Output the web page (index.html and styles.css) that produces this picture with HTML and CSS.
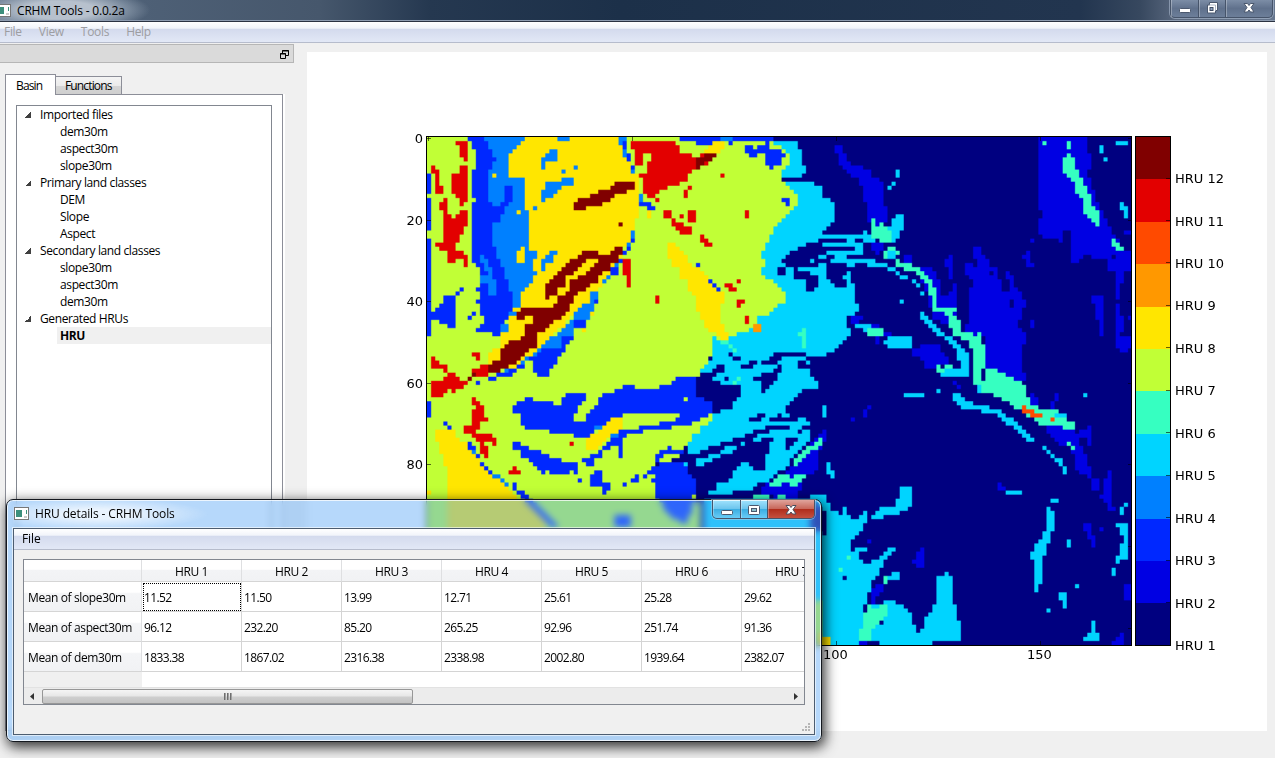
FILE: index.html
```html
<!DOCTYPE html>
<html lang="en">
<head>
<meta charset="utf-8">
<title>CRHM Tools - 0.0.2a</title>
<link rel="stylesheet" href="styles.css">
</head>
<body>
<div class="app">
  <header class="titlebar">
    <svg class="app-icon" width="16" height="14" viewBox="0 0 16 14"><rect x=".5" y=".5" width="14" height="12" fill="#fff" stroke="#777"/><rect x="2" y="3" width="6" height="7" fill="#3c8f7c"/><rect x="12" y="3" width="1" height="4" fill="#3c8f7c"/><rect x="10" y="9" width="3" height="2" fill="#ccc"/></svg>
    <span class="title">CRHM Tools - 0.0.2a</span>
    <div class="caption main-caption">
      <span class="cap"><svg width="14" height="14" viewBox="0 0 14 14"><rect x="1.5" y="8.5" width="11" height="4" rx="1" fill="#fff" stroke="#4b586e"/></svg></span>
      <span class="cap"><svg width="14" height="14" viewBox="0 0 14 14"><path d="M4.500 2.500h8v8h-2v2.500h-8v-8h2z" fill="#fff" stroke="#4b586e"/><path d="M4 5h6.500v6" fill="none" stroke="#9aa6ba" stroke-width=".8"/><rect x="5" y="7.500" width="3" height="3" fill="#8ea0bd" stroke="#3f4c63"/></svg></span>
      <span class="cap wide"><svg width="14" height="14" viewBox="0 0 14 14"><path d="M2 3.500h3.500l1.500 2 1.500-2h3.500l-3 4 3 4.500h-3.500l-1.500-2-1.500 2h-3.500l3-4.500z" fill="#fff" stroke="#4b586e"/></svg></span>
    </div>
  </header>
  <nav class="menubar main-menu"><span>File</span><span>View</span><span>Tools</span><span>Help</span></nav>
  <main class="work">
    <aside class="dock">
      <div class="dock-title"><svg width="9" height="9" viewBox="0 0 9 9"><path d="M2.500 3V.5h6v5H6M2 1h7" fill="none" stroke="#000"/><path d="M.5 3.500h5v5h-5zM0 4h6" fill="#dadada" stroke="#000"/></svg></div>
      <div class="tabs"><span class="tab active">Basin</span><span class="tab">Functions</span></div>
      <div class="pane">
        <ul class="tree">
          <li class="group">Imported files</li><li>dem30m</li><li>aspect30m</li><li>slope30m</li>
          <li class="group">Primary land classes</li><li>DEM</li><li>Slope</li><li>Aspect</li>
          <li class="group">Secondary land classes</li><li>slope30m</li><li>aspect30m</li><li>dem30m</li>
          <li class="group">Generated HRUs</li><li class="current">HRU</li>
        </ul>
      </div>
    </aside>
    <section class="figure">
      <canvas id="map" class="map" width="519" height="375"></canvas>
      <svg class="axes" id="axes" width="960" height="679" viewBox="307 52 960 679"></svg>
    </section>
  </main>
</div>

<div class="dialog">
  <div class="dlg-title">
    <svg class="app-icon" width="16" height="14" viewBox="0 0 16 14"><rect x=".5" y=".5" width="14" height="12" fill="#fff" stroke="#777"/><rect x="2" y="3" width="6" height="7" fill="#3c8f7c"/><rect x="12" y="3" width="1" height="4" fill="#3c8f7c"/><rect x="10" y="9" width="3" height="2" fill="#ccc"/></svg>
    <span class="title">HRU details - CRHM Tools</span>
    <div class="caption dlg-caption">
      <span class="cap"><svg width="14" height="12" viewBox="0 0 14 12"><rect x="1.500" y="6.500" width="11" height="4" rx="1" fill="#fff" stroke="#4b586e"/></svg></span>
      <span class="cap"><svg width="14" height="12" viewBox="0 0 14 12"><rect x="1.500" y="1.500" width="11" height="9" rx="1" fill="#fff" stroke="#4b586e"/><rect x="4.500" y="4.500" width="5" height="3" fill="#8fc0cc" stroke="#4b586e"/></svg></span>
      <span class="cap wide close"><svg width="14" height="14" viewBox="0 0 14 14"><path d="M2 2.500h3.500l1.500 2 1.500-2h3.500l-3 4 3 4.500h-3.500l-1.500-2-1.500 2h-3.500l3-4.500z" fill="#fff" stroke="#4b4e5e"/></svg></span>
    </div>
  </div>
  <div class="client">
    <nav class="menubar dlg-menu"><span>File</span></nav>
    <div class="table">
      <div class="grid">
        <div class="hc corner"></div><div class="hc">HRU 1</div><div class="hc">HRU 2</div><div class="hc">HRU 3</div><div class="hc">HRU 4</div><div class="hc">HRU 5</div><div class="hc">HRU 6</div><div class="hc">HRU 7</div>
        <div class="rh">Mean of slope30m</div><div class="c focus">11.52</div><div class="c">11.50</div><div class="c">13.99</div><div class="c">12.71</div><div class="c">25.61</div><div class="c">25.28</div><div class="c">29.62</div>
        <div class="rh">Mean of aspect30m</div><div class="c">96.12</div><div class="c">232.20</div><div class="c">85.20</div><div class="c">265.25</div><div class="c">92.96</div><div class="c">251.74</div><div class="c">91.36</div>
        <div class="rh">Mean of dem30m</div><div class="c">1833.38</div><div class="c">1867.02</div><div class="c">2316.38</div><div class="c">2338.98</div><div class="c">2002.80</div><div class="c">1939.64</div><div class="c">2382.07</div>
        <div class="rest"></div>
      </div>
      <div class="scroll">
        <svg width="17" height="15"><path d="M10 4v7L6 7.500z" fill="#333"/></svg>
        <div class="thumb"><i></i><i></i><i></i></div>
        <svg class="right" width="17" height="15"><path d="M7 4v7l4-3.500z" fill="#333"/></svg>
      </div>
    </div>
    <svg class="grip" width="9" height="9" fill="#b5b5b5"><path d="M6 0h2v2H6zM3 3h2v2H3zM6 3h2v2H6zM0 6h2v2H0zM3 6h2v2H3zM6 6h2v2H6z"/></svg>
  </div>
</div>
<script src="map.js"></script>
</body>
</html>
```
FILE: styles.css
```css
* { box-sizing: border-box; }
body { margin: 0; width: 1275px; height: 758px; overflow: hidden; position: relative; background: #f0f0f0; font: 12px/17px "Open Sans", "Noto Sans", sans-serif; letter-spacing: -0.38px; color: #000; }
.app { height: 758px; display: flex; flex-direction: column; }
.titlebar { height: 22px; display: flex; align-items: flex-start; padding-top: 3px; border-bottom: 1px solid #2b3342; box-shadow: inset 0 -1px #8e9cb0;
  background: radial-gradient(ellipse 90px 22px at 60px 10px, #b7c1cd 40%, rgba(150,165,182,.6) 75%, transparent), linear-gradient(90deg, #5d6f85 0, #4e6076 140px, #46576c 320px, #253850 430px, #1c3049 620px, #22354f 1080px, #37485f 1140px, #5c6a80 1180px, #66768e 1275px); }
.titlebar .app-icon { margin: 1px 0 0 -4px; }
.title { margin-left: 5px; letter-spacing: -.12px; }
.titlebar .title { line-height: 16px; letter-spacing: -.18px; }
.caption { margin-left: auto; display: flex; border: 1px solid #46546a; border-top: 0; border-radius: 0 0 5px 5px; box-shadow: 0 0 0 1px rgba(200,215,235,.45); }
.cap { width: 28px; display: flex; justify-content: center; border-right: 1px solid #46546a; box-shadow: inset 1px 0 rgba(255,255,255,.3); }
.cap:last-child { border-right: 0; }
.cap svg { display: block; }
.main-caption { height: 18px; width: 103px; margin-top: -3px; margin-right: 2px; background: linear-gradient(#7c8da6, #60718c 50%, #6c7e99); }
.main-caption .cap:nth-child(2) { width: 27px; }
.caption .wide { flex: 1; }
.menubar { height: 21px; display: flex; border-bottom: 1px solid #b6bccc; background: linear-gradient(#fff 0, #f1f4fa 32%, #d3daed 34%, #e2e8f6 100%); }
.main-menu { color: #9d9da1; padding-left: 4px; gap: 17px; line-height: 20px; letter-spacing: -.3px; }
.work { flex: 1; display: flex; padding-top: 1px; }
.dock { width: 294px; display: flex; flex-direction: column; }
.dock-title { height: 19px; border: 1px solid #b6b6b6; border-left: 0; background: #dadada; display: flex; justify-content: flex-end; padding: 5px 4px 0 0; }
.tabs { display: flex; align-items: flex-end; padding-left: 5px; margin-top: 11px; height: 21px; position: relative; z-index: 1; letter-spacing: -.85px; }
.tab { height: 18px; width: 66px; padding: 0 0 0 9px; border: 1px solid #8c8e98; border-left: 0; border-bottom: 0; background: linear-gradient(#f4f4f4, #ebebeb 50%, #d5d5d5 55%, #cfcfcf); margin-bottom: 1px; line-height: 18px; }
.tab.active { width: 51px; height: 21px; border-left: 1px solid #8c8e98; padding-left: 10px; background: #fff; margin-bottom: 0; line-height: 21px; }
.pane { margin: -1px 11px 0 5px; height: 637px; border: 1px solid #8c8e98; background: #fff; padding: 10px; box-shadow: 2px 0 #fff; }
.tree { margin: 0; padding: 0; list-style: none; height: 600px; border: 1px solid #828790; }
.tree li { height: 17px; line-height: 17px; margin-left: 40px; padding-left: 3px; }
.tree .group { margin-left: 0; padding-left: 23px; background: linear-gradient(135deg, transparent 50%, #404040 50%) 8px 6px / 6px 6px no-repeat; }
.tree .current { font-weight: 700; background: #f0f0f0; }
.figure { width: 960px; height: 679px; margin: 8px 0 0 13px; background: #fff; position: relative; }
.map { position: absolute; left: 120px; top: 85px; width: 705px; height: 508px; }
.axes { position: absolute; left: 0; top: 0; font: 13px "DejaVu Sans", sans-serif; letter-spacing: 0; }
.dialog { position: absolute; left: 6px; top: 499px; width: 816px; height: 243px; padding: 1px 6px 6px; border: 1px solid #14181e; border-radius: 7px; background: rgba(100,172,247,.47); backdrop-filter: blur(3px); box-shadow: inset 0 0 0 1px rgba(255,255,255,.75), 2px 4px 13px 1px rgba(0,0,0,.8); display: flex; flex-direction: column; }
.dlg-title { height: 27px; display: flex; align-items: flex-start; padding-top: 4px; background: radial-gradient(ellipse 110px 16px at 85px 13px, rgba(255,255,255,.7) 30%, transparent); }
.dlg-title .app-icon { margin: 2px 0 0 1px; }
.dlg-caption { height: 19px; width: 103px; margin: -5px 0 0 auto; background: linear-gradient(rgba(255,255,255,.55), rgba(180,200,220,.45) 50%, rgba(90,130,170,.3) 52%, rgba(190,220,240,.4)); align-items: stretch; overflow: hidden; }
.dlg-caption .cap { padding-top: 4px; }
.dlg-caption .cap:nth-child(2) { width: 27px; }
.dlg-caption .close { padding-top: 3px; background: linear-gradient(#e0a49c, #c8675a 48%, #b02d1c 52%, #c4503f); }
.client { flex: 1; border: 1px solid #4d5d70; background: #f0f0f0; box-shadow: 0 0 0 1px rgba(255,255,255,.6); position: relative; }
.dlg-menu { padding: 0 0 0 8px; line-height: 20px; height: 21px; letter-spacing: -.1px; }
.table { margin: 9px 9px 0; width: 782px; height: 146px; border: 1px solid #828790; background: #fff; overflow: hidden; display: flex; flex-direction: column; }
.grid { display: grid; grid-template-columns: 118px repeat(7, 100px); grid-template-rows: 22px 30px 30px 30px 15px; flex: 1; }
.hc { text-align: center; line-height: 23px; background: linear-gradient(#fff 45%, #f3f4f6 46%, #f1f2f4); border-right: 1px solid #dedfe1; border-bottom: 1px solid #d5d5d5; }
.rh { line-height: 31px; padding-left: 4px; background: linear-gradient(#fff 35%, #f4f5f7 40%, #f1f2f4); border-right: 1px solid #dedfe1; border-bottom: 1px solid #d5d5d5; letter-spacing: -.38px; white-space: nowrap; }
.c { line-height: 31px; padding-left: 2px; border-right: 1px solid #d4d4d4; border-bottom: 1px solid #d4d4d4; letter-spacing: -.6px; }
.focus { outline: 1px dotted #000; outline-offset: -2px; }
.rest { background: #f0f0f0; }
.scroll { height: 17px; display: flex; align-items: center; background: #ececec; border-top: 1px solid #e2e2e2; }
.thumb { margin-left: 1px; width: 371px; height: 15px; border: 1px solid #979797; border-radius: 2px; background: linear-gradient(#f5f5f5, #e6e6e6 48%, #cfcfcf 52%, #c3c3c3); display: flex; gap: 1px; justify-content: center; padding-top: 3px; }
.thumb i { width: 2px; height: 7px; background: linear-gradient(90deg, #555, #bbb); }
.scroll .right { margin-left: auto; }
.grip { position: absolute; right: 3px; bottom: 2px; }
```
FILE: map.js
```js
// HRU raster: 173 x 125 cells, each survey sheet listing its regions as "class: x y x y ..." in thirds
// of a pixel from the sheet's corner. Four numbers are a box; more are a polygon. Later lines win.
const COLORS = ['', '#000080', '#0000e3', '#0028ff', '#0080ff', '#00d4ff', '#36ffc1', '#c1ff36', '#ffe600', '#ff9800', '#ff4a00', '#e30000', '#800000'];
const SHEETS = [
{ x: 400, y: 125, w: 240, h: 185, base: 7, data: `
8: 375 35 660 35 672 60 680 85 690 110 700 125 700 142 720 145 732 160 732 200 720 210 720 270 700 300 693 345 680 355 650 420 640 440 610 470 590 500 560 540 530 570 240 570 240 35
4: 240 35 375 35 365 48 350 65 340 75 327 90 327 130 315 132 327 145 327 155 362 155 375 170 375 250 388 265 388 375 400 380 412 390 412 400 400 400 400 430 412 440 400 450 400 470 385 480 362 500 362 540 340 550 325 570 240 570
3: 205 35 250 35 250 45 265 45 265 70 278 70 278 96 290 96 290 108 278 108 278 130 265 132 265 228 280 240 298 240 315 215 315 192 305 180 340 180 340 215 315 245 315 262 302 265 302 290 278 290 278 360 290 365 290 400 302 402 302 425 315 435 315 460 327 465 327 500 340 500 340 560 330 570 240 570 240 535 228 530 240 518 240 500 228 492 240 485 240 475 265 475 265 508 290 508 290 463 278 460 278 435 265 430 265 405 240 390 240 408 250 430 265 440 265 448 240 448 240 425 215 410 215 230 228 225 215 210 215 130 228 130 228 70 215 65 215 45 205 45
3: 80 145 92 205
3: 80 218 92 315
3: 80 340 92 570
3: 80 560 104 555 118 540 130 535 130 510 167 510 167 570 80 570
3: 180 487 190 498
3: 167 498 179 510
3: 215 560 228 570
4: 475 35 510 45
4: 447 70 472 70 472 105 447 105 435 120 435 130 425 130 425 95 440 90
4: 485 132 497 143
4: 520 120 533 131
4: 435 168 485 168 485 155 522 155 522 180 497 180 485 192 460 205 460 215 435 218 435 230 425 230 425 192 437 190
4: 400 240 412 252
8: 350 253 362 265
8: 276 143 289 155
8: 350 375 375 410
8: 363 363 375 375
4: 447 375 472 375 472 387 460 390 460 410 440 420 435 435 425 435 425 400 440 395
4: 658 35 682 57
4: 670 57 682 95
3: 670 45 680 68
3: 680 85 693 110
3: 693 118 706 130
4: 693 130 706 142
4: 718 205 731 240
3: 718 230 750 242
4: 693 315 706 340
3: 693 340 706 350
4: 680 350 693 365
3: 680 365 693 378
3: 668 376 680 388
12: 522 230 535 218 570 215 572 205 597 205 600 192 622 190 645 168 706 168 706 190 682 190 680 205 658 205 632 215 632 228 608 228 608 240 560 242 558 252 522 252
12: 656 290 668 302
12: 350 570 362 548 460 548 462 540 475 540 475 510 497 505 510 488 470 488 470 505 450 510 448 522 437 522 437 475 460 460 475 440 500 420 510 402 535 402 548 378 595 378 597 390 632 390 632 378 645 365 668 365 668 390 655 400 655 410 632 412 632 430 608 445 597 460 583 475 560 488 545 500 520 520 510 540 510 558 495 570
8: 510 485 510 465 535 460 535 450 560 448 560 435 590 415 597 402 560 400 560 412 535 430 520 445 497 455 497 485
4: 645 410 656 430
3: 633 430 656 448
4: 620 448 632 460
4: 608 460 620 472
4: 570 500 596 500 596 530 583 535 580 555 560 570 520 570 535 550 560 535 570 520
3: 583 522 596 534
3: 655 400 668 412
11: 165 45 205 45 205 105 192 105 180 92 180 57 165 55
11: 92 120 104 120 104 132 116 132 116 180 130 182 130 215 118 205 104 200 104 145 92 143
11: 180 120 204 120 204 225 192 228 192 240 180 240 180 228 165 205 155 200 155 145 180 145
11: 130 218 142 218 142 265 155 265 155 277 167 277 180 265 180 253 204 253 204 300 192 302 192 328 180 330 180 350 165 355 165 390 180 375 190 377 190 390 204 390 204 425 192 425 192 400 165 400 165 410 142 410 142 390 130 375 118 370 104 360 104 350 130 350 130 253 118 250 118 232 130 230
11: 668 400 693 400 693 485 680 485 680 450 668 445
11: 693 45 750 45 750 85 730 85 730 118 706 118 706 70 693 68
11: 743 105 750 120
11: 718 145 750 145 750 215 735 205 732 180 732 160 718 155` },
{ x: 400, y: 310, w: 240, h: 250, base: 7, data: `
8: 345 0 580 0 575 15 520 15 490 50 455 80 430 105 400 130 375 155 340 175 310 182 265 165 265 130 290 115 302 115 302 70 327 65 327 40 315 35 330 20
3: 80 0 165 0 165 52 142 52 142 42 118 40 118 30 92 30 92 77 80 77
3: 215 5 228 17
3: 204 17 216 29
3: 240 0 345 0 327 20 325 35 302 40 302 75 278 77 278 65 228 62 228 52 240 50 250 30 240 10
4: 327 0 345 14
4: 302 40 327 65
12: 365 0 510 0 495 15 475 28 450 42 435 65 412 70 412 100 400 115 375 130 360 150 345 160 325 170 302 180 302 188 265 185 265 165 278 150 302 150 302 115 315 102 340 92 362 90 375 75 375 42 400 40 390 20 350 28 350 8
4: 535 0 580 0 570 15 560 40 520 52 520 80 490 110 440 118 412 140 385 155 362 165 362 155 400 130 425 105 470 70 497 45
3: 520 30 560 30 556 52 520 50
3: 485 80 520 80 510 100 497 105 485 135 470 150 460 175 447 180 447 198 412 198 400 180 400 160 385 150 425 120 485 118
3: 350 165 375 176
3: 315 185 350 178 340 198 290 198 300 188
3: 265 200 290 210
3: 228 212 240 223
4: 315 175 328 187
8: 548 55 560 65
11: 92 140 104 140 104 150 118 152 118 162 142 165 142 187 130 187 130 175 92 172
11: 215 127 240 127 240 150 228 150 228 138 215 138
11: 92 212 130 212 130 200 142 198 142 187 165 187 165 198 180 200 180 212 204 212 190 235 167 237 167 248 155 248 150 237 142 237 142 248 130 250 130 260 92 260
11: 215 175 240 175 240 165 265 165 265 198 215 198
12: 215 187 228 198
12: 204 200 216 211
11: 215 262 228 262 228 273 240 275 240 285 253 287 253 320 265 322 265 333 253 335 240 345 240 358 228 362 228 370 278 372 278 385 290 390 290 407 278 407 278 397 253 397 253 405 265 410 265 445 253 445 253 433 240 430 240 405 228 402 215 382 190 370 190 348 215 346 215 310 225 300 215 285
11: 510 396 522 408
11: 337 468 350 480
11: 325 480 362 492
3: 80 273 92 322
3: 130 336 142 347
3: 143 348 155 359
3: 155 360 167 370
8: 106 360 155 360 180 390 204 405 204 420 240 440 250 480 300 510 340 550 440 640 440 750 142 750 142 470 130 465 130 435 118 430 118 397 106 390
8: 80 545 92 560
3: 204 397 216 420
3: 215 410 228 420
4: 215 420 228 432
3: 228 433 240 445
3: 240 457 252 468
3: 253 469 265 481
3: 265 482 277 494
4: 278 494 302 505
4: 302 505 315 517
4: 315 517 327 529
3: 327 517 340 520 350 540 375 545 400 575 450 620 480 665 450 655 410 610 360 565 340 545
3: 640 615 690 650
3: 340 288 350 275 375 272 375 262 400 262 400 275 460 275 460 285 485 285 485 260 497 260 497 250 558 250 558 273 545 275 545 288 535 290 535 305 522 310 522 335 558 335 558 320 570 310 583 290 597 280 597 262 608 250 645 248 645 238 670 235 670 225 706 225 706 237 750 237 750 310 670 310 665 322 635 325 620 340 595 350 583 360 570 382 522 382 522 372 450 370 450 358 375 358 362 345 362 320 340 305
8: 635 325 668 325 668 350 655 365 635 375 620 390 608 410 583 425 570 427 558 420 558 388 570 382 583 372 597 360 620 345
4: 583 348 608 358
3: 718 348 750 348 750 358 730 360 730 370 680 372 680 382 668 385 668 445 656 445 656 410 632 412 620 420 608 420 620 400 632 385 645 372 668 360 718 358
4: 635 372 656 384
3: 597 422 608 422 608 440 583 455 583 468 558 468 558 458 545 455 545 445 570 445 583 433 597 433
3: 340 397 362 397 362 408 385 408 385 420 425 422 425 433 447 433 447 445 485 447 485 457 533 458 533 492 522 492 510 480 508 492 447 492 440 485 430 494 425 482 412 480 400 465 385 460 385 448 362 440 362 428 340 418
3: 583 482 608 482 608 515 620 520 632 535 620 552 608 550 608 540 583 528 570 528 570 495 583 495
3: 535 506 547 518
3: 668 518 680 530
3: 693 505 706 505 706 495 718 495 718 516 693 517
3: 730 495 742 505
3: 742 482 750 493` },
{ x: 640, y: 125, w: 240, h: 185, base: 1, data: `
5: 430 45 475 45 475 70 487 70 487 118 498 120 498 142 487 153 430 155 430 167 522 168 522 180 547 182 547 215 560 217 583 230 583 290 560 305 547 328 700 328 700 350 672 348 670 340 645 340 645 350 622 350 622 338 537 338 535 350 500 352 497 362 475 365 475 375 450 378 440 395 425 405 437 425 412 425 412 448 437 448 440 425 462 425 462 460 497 460 497 497 522 497 535 485 535 460 510 445 510 437 475 437 475 425 547 425 560 440 560 460 583 485 610 487 622 480 610 460 620 437 632 437 635 470 647 475 647 535 658 537 658 555 645 570 330 570 330 45
5: 548 350 660 352 670 362 670 387 660 387 655 378 645 365 550 362
5: 560 377 670 377 670 387 620 390 620 400 705 402 705 412 740 415 740 423 685 423 660 412 630 425 608 415 590 412 565 410 585 400 585 390 560 390
5: 537 388 558 398
5: 537 412 560 435
5: 512 400 523 411
5: 672 316 683 328
5: 730 387 750 397
5: 742 180 750 192
2: 583 68 597 57 608 57 610 80 622 95 622 108 645 118 670 130 693 132 693 155 720 157 720 168 732 170 732 230 743 235 743 300 697 300 685 285 685 230 672 228 672 182 658 180 658 168 635 150 610 135 597 118 597 95
2: 697 350 750 350 750 375 735 390 710 390 693 370
6: 697 305 750 345
6: 697 280 707 305
6: 720 290 732 305
7: 0 35 380 35 380 45 400 55 430 60 430 70 440 80 450 95 450 105 440 120 425 145 415 155 430 168 440 185 450 195 465 210 475 220 475 235 465 245 450 262 440 275 412 295 400 305 400 325 388 330 388 350 378 355 375 372 355 380 365 390 365 405 380 415 380 422 365 430 365 445 390 465 412 485 437 497 437 530 400 550 375 570 0 570
3: 120 35 400 45
3: 168 45 218 57
4: 245 35 280 45
3: 315 57 340 57 340 70 355 70 355 57 388 57 388 68 425 68 425 80 437 82 437 95 425 97 425 118 402 120 402 130 390 130 390 118 378 118 378 82 350 82 350 95 327 95 327 82 315 80
3: 378 45 390 57
8: 218 45 267 45 255 57 255 68 243 80 190 82 205 70 218 57
3: 265 45 278 57
11: 0 45 45 45 55 57 60 45 95 45 105 57 118 70 120 80 155 82 160 95 170 97 170 130 145 145 145 165 120 167 120 180 85 180 82 192 58 195 45 205 45 215 22 215 22 205 10 200 10 155 0 150
7: 10 85 35 85 35 105 22 108 22 140 0 142 0 118 10 118
12: 180 82 230 82 230 95 215 97 215 105 205 118 192 118 180 130 168 130 168 97 180 97
11: 192 106 204 118
11: 182 82 194 92
11: 243 143 255 155
11: 145 180 157 191
11: 133 192 145 215
11: 47 217 59 228
11: 72 253 95 277
11: 120 265 132 277
11: 145 253 168 289
11: 95 277 106 277 106 290 130 292 130 302 155 302 155 326 120 326 106 302 95 300
11: 182 327 193 350
11: 192 340 205 340 205 350 217 350 217 362 192 362
11: 315 253 328 277
11: 290 461 302 473
11: 255 473 278 473 278 485 290 485 290 497 265 497 265 487 255 485
11: 47 510 59 534
11: 290 522 315 522 315 533 302 535 302 546 290 546
3: 425 217 450 217 450 240 437 240 437 228 425 228
3: 0 228 35 240
3: 22 240 47 252
4: 0 205 10 228
8: 22 255 34 277
8: 82 352 105 352 105 362 120 372 145 390 145 410 158 412 158 422 180 435 205 462 217 485 240 500 255 512 255 533 243 540 243 570 180 570 168 555 168 510 158 505 145 490 145 473 120 455 120 435 97 420 97 400 82 395
3: 168 412 180 424
3: 205 461 217 473
3: 217 474 229 485
3: 229 486 241 497` },
{ x: 640, y: 310, w: 240, h: 250, base: 1, data: `
5: 375 0 655 0 645 10 622 17 622 50 635 55 635 77 605 100 583 120 560 137 500 140 500 190 525 205 535 218 525 232 497 240 475 252 460 265 437 290 437 310 450 320 475 322 497 325 510 345 487 348 487 358 510 360 512 390 487 410 470 435 450 455 437 480 412 485 365 545 200 555 205 545 230 540 230 520 265 515 280 500 280 480 305 460 327 458 340 480 365 490 378 480 378 435 390 430 388 400 380 385 345 395 330 385 290 385 250 402 215 410 180 432 145 432 145 400 158 375 180 350 205 345 205 305 245 305 280 290 280 275 305 262 305 230 230 225 180 200 180 178 205 160 218 135 218 75 280 70 350 40 355 15
5: 190 570 520 750
1: 265 127 278 138
1: 278 137 302 151
1: 402 127 500 127 500 138 430 138 425 150 410 152 402 165 365 165 365 152 388 150 400 138
1: 302 165 327 163 327 152 352 152 352 163 340 173 302 175
1: 475 150 500 150 500 180 487 178 475 172
1: 415 165 428 165 425 185 415 190 412 210 400 215 388 235 378 237 375 250 365 250 365 225 352 215 340 210 340 200 365 198 375 187 402 185
1: 165 190 205 190 205 187 230 180 230 165 255 165 255 187 230 190 218 210 245 212 245 222 230 225 230 237 255 237 258 225 305 225 305 260 290 265 280 275 280 297 270 297 265 285 255 290 255 300 240 310 218 310 218 275 195 262 165 260
1: 255 200 267 211
1: 327 322 352 322 352 310 378 310 378 335 330 335
5: 366 322 378 334
1: 390 322 412 322 412 312 425 320 475 322 475 333 390 335
1: 340 360 378 358 378 347 450 347 450 357 487 357 487 372 500 372 500 382 475 372 462 360 392 362 378 370 355 375 352 385 327 387 327 395 378 395 378 382 402 387 390 400 388 430 378 435 378 480 350 490 340 478 327 460 305 458 280 480 280 500 265 515 232 520 228 540 205 545 170 550 170 510 150 490 130 470 130 458 100 445 118 430 145 430 145 420 215 420 218 408 250 410 255 398 290 397 292 385 315 382 318 373 340 370
1: 437 387 475 387 475 398 462 400 450 415 437 420
1: 412 487 400 500 380 515 350 525 340 545 310 550 310 567 400 567 470 560 470 520 430 490
5: 145 420 180 432
5: 130 458 165 458 180 445 205 442 215 432 245 432 230 448 195 458 190 468 135 468
5: 245 428 250 420 260 408 290 408 290 418 278 430
5: 302 397 315 408
5: 497 150 512 162
5: 497 175 512 187
5: 547 288 560 320
5: 500 360 511 385
5: 560 458 572 458 572 480 585 485 585 505 574 505 572 492 560 490
2: 635 20 655 10 660 20 672 20 672 30 650 40 637 38
2: 672 300 684 320
2: 684 287 696 298
2: 633 322 646 334
2: 550 360 560 360 560 395 535 400 535 465 525 468 522 492 490 490 487 540 475 545 475 567 365 560 365 530 412 510 440 490 470 460 510 430 525 400
6: 537 385 548 396
6: 500 410 525 398 535 400 535 418 512 420 500 440 487 450 475 465 462 465 465 445 480 435
6: 412 500 437 495 450 505 465 495 497 497 490 515 475 530 455 528 450 515 425 518 425 530 390 530 390 520 405 510
6: 340 555 388 566
6: 412 555 437 566
5: 647 40 690 42 693 65 660 60 647 52
2: 693 77 750 77 750 100 710 100 710 90
6: 680 52 732 55 732 77 685 75
2: 697 40 720 52
6: 730 90 750 102
6: 487 52 498 52 498 115 487 115 487 77 475 75 487 65
6: 240 92 265 102
6: 265 102 278 114
6: 278 115 290 126
6: 290 198 302 210
6: 278 211 290 222
7: 0 0 400 0 378 15 355 17 350 40 315 65 280 75 265 90 243 90 218 77 218 135 205 142 205 165 180 180 180 190 165 210 155 202 108 202 95 225 60 225 60 237 0 240
8: 170 0 243 0 243 35 255 40 255 65 267 68 267 85 243 90 220 70 205 65 192 45 192 30 180 25
9: 340 40 365 65
11: 315 17 327 40
3: 0 238 60 237 60 228 95 225 108 202 155 202 168 212 168 260 192 262 195 275 218 277 218 310 195 325 160 335 155 347 0 370
7: 132 262 145 273
7: 0 310 118 310 118 322 105 335 60 335 60 347 0 347
7: 0 370 10 360 95 358 95 347 155 347 158 335 180 335 182 322 205 322 217 310 205 345 182 350 180 370 158 375 155 395 135 405 130 418 95 418 90 410 80 420 60 422 60 435 47 437 47 455 60 580 180 580 180 750 0 750
1: 100 445 130 442 150 490 168 500 168 445
3: 60 422 82 420 82 408 95 408 97 418 145 420 120 432 70 435 60 455 47 455 47 437
7: 72 433 120 445
7: 60 445 95 458
3: 60 458 130 458 145 485 158 500 168 510 168 560 155 600 130 650 80 610 47 560 47 520 35 515 35 505 22 493 22 485 35 470 47 470
3: 10 495 22 505
7: 22 495 47 510
7: 155 557 168 567
1: 145 434 200 434 180 444 160 456 145 456` },
{ x: 880, y: 125, w: 253, h: 256, base: 1, data: `
2: 478 35 625 35 625 80 637 85 635 130 622 135 622 155 635 160 637 195 648 200 648 228 658 232 660 250 672 255 672 278 685 282 685 302 697 305 697 325 710 330 722 375 750 375 753 437 735 440 735 470 722 475 722 520 710 520 710 437 685 435 685 400 640 398 632 388 610 390 608 400 597 410 575 412 575 325 562 315 550 325 550 350 540 348 537 337 490 337 478 325 478 280 490 275 490 255 478 250
1: 697 388 710 400
6: 563 45 575 70
6: 490 45 502 57
6: 550 95 563 93 563 82 575 82 575 93 587 95 587 130 600 132 600 155 612 157 612 178 622 182 624 205 636 207 636 240 648 242 660 265 660 302 648 302 648 290 624 278 624 265 612 260 612 230 600 220 600 205 587 200 587 170 563 155 563 142 550 140
6: 697 338 710 338 710 350 722 352 722 362 735 365 735 375 710 375 697 360
5: 710 45 747 57
5: 660 58 673 82
5: 673 94 686 106
5: 722 230 735 230 735 240 747 242 747 277 735 277 735 255 722 252
5: 50 130 62 155
5: 37 168 49 179
5: 25 180 37 192
5: 50 265 73 265 73 315 60 318 60 335 48 348 0 348 0 303 37 303 37 278 50 275
6: 0 303 25 303 25 320 37 322 37 348 0 348
2: 0 168 12 170 12 240 25 243 25 290 0 290
6: 0 291 12 303
2: 735 315 753 328
2: 453 338 465 350
2: 440 377 453 377 453 410 465 412 465 424 440 424 440 402 430 395 440 388
2: 283 363 295 363 307 388 330 402 330 425 354 427 354 455 367 462 367 495 390 510 390 462 378 455 380 437 403 455 403 485 428 500 428 520 440 525 440 545 428 550 428 580 416 590 416 607 440 625 440 655 428 660 428 735 440 745 440 780 320 780 310 640 250 620 250 605 270 595 270 490 283 485 283 470 258 445 258 412 278 412 283 425 295 420 283 395
1: 390 522 403 546
1: 332 437 343 450
2: 196 402 208 400 210 388 220 388 220 460 208 460 208 437 196 430
2: 73 388 97 410
2: 120 425 158 427 168 440 170 460 183 465 183 510 208 510 220 497 220 475 232 475 232 545 170 548 155 560 145 520 120 460
2: 160 560 245 560 205 590 190 600 160 580
2: 453 583 465 608
2: 637 510 660 510 672 525 672 632 660 632 660 583 648 580 648 535 637 530
2: 710 535 722 535 722 570 735 575 735 610 722 620 722 632 753 632 753 668 735 682 722 680 710 665
2: 745 570 753 583
2: 98 672 120 670 120 658 172 658 183 680 208 695 208 718 155 728 135 728 120 700 98 690
2: 0 350 25 370 0 372
2: 12 622 37 640
6: 12 375 25 365 45 365 60 377 60 388 48 390 60 410 97 412 97 425 120 428 132 437 145 455 158 465 158 485 170 488 170 545 232 548 232 558 220 562 220 572 232 580 245 588 245 620 290 632 295 620 307 622 307 655 318 658 318 730 307 735 305 768 320 765 320 733 354 733 354 743 378 745 390 760 415 770 415 780 280 780 283 680 270 675 270 655 245 640 220 628 220 610 196 600 208 595 208 582 196 575 196 560 160 557 158 520 147 515 147 475 120 460 110 450 97 437 75 432 50 422 37 400 12 395
5: 20 375 48 398
5: 0 412 25 423
5: 25 425 48 436
5: 50 437 60 448
5: 62 450 85 461
5: 97 461 109 473
5: 110 474 122 485
5: 122 498 134 510
5: 60 522 74 534
5: 122 560 134 560 134 570 158 590 170 605 193 620 196 632 220 632 220 645 245 665 255 680 268 695 268 768 258 755 183 755 183 740 245 730 245 705 232 700 232 680 220 670 208 645 196 640 170 630 158 610 134 590 122 580
5: 25 632 97 632 97 668 25 668 25 655 12 655 25 645
6: 0 608 12 632
6: 158 718 183 720 196 740 172 740
6: 196 718 218 730` },
{ x: 810, y: 380, w: 323, h: 268, base: 1, data: `
5: 0 0 25 25
5: 37 75 50 112
5: 50 248 62 248 62 268 75 270 75 295 63 292 50 280
5: 380 27 392 39
5: 283 39 345 51
5: 820 39 834 51
5: 405 27 418 27 418 39 442 42 465 62 490 68 492 75 540 78 545 90 575 95 590 110 612 115 625 130 640 145 660 165 675 178 672 187 650 180 625 160 610 140 575 125 555 105 515 97 500 88 455 85 430 65 430 50
5: 698 198 711 210
5: 711 210 723 222
5: 723 223 735 235
5: 735 235 760 237 760 258 772 262 772 283 760 283 760 262 740 248
2: 665 45 675 40 687 75 665 75
2: 735 40 748 65
2: 722 65 735 85
2: 700 140 760 140 762 150 797 155 797 165 825 150 835 140 847 140 847 195 835 195 835 175 797 172 810 200 835 230 835 255 847 262 847 290 872 310 872 330 850 330 847 310 825 290 797 265 797 230 772 200 740 190
6: 490 0 625 0 640 15 650 17 650 45 662 50 662 75 690 85 735 90 772 120 797 130 797 150 762 148 762 137 690 137 675 120 640 100 612 85 590 65 560 50 540 40 515 37 500 20
5: 735 102 772 102 772 120 740 115
5: 505 10 517 35
10: 638 75 650 75 650 88 675 90 675 100 698 100 698 112 665 112 650 102 638 98
10: 723 112 736 124
6: 772 186 785 198
6: 786 198 798 210
2: 897 270 908 272 908 375 920 390 918 405 895 390 885 370 872 362 872 350 885 340 885 300 895 295
2: 565 308 578 308 578 318 590 320 590 332 565 330
2: 825 432 840 432 840 450 860 480 858 503 845 500 835 470 823 460
2: 870 443 882 455
2: 173 480 186 492
2: 322 520 332 505 345 505 345 563 320 563 320 552 308 548 320 540
2: 430 3 442 15
2: 442 15 454 27
2: 173 75 185 87
2: 161 87 173 112
2: 123 112 136 124
2: 943 615 965 610 965 662 945 660
2: 905 785 920 785 935 762 945 762 945 795 905 795
2: 37 150 50 150 50 185 37 190 25 220 25 260 12 280 0 285 0 190
6: 0 200 25 185 25 175 38 175 38 187 25 200 15 212 0 212
5: 590 333 638 345
5: 723 357 748 369
5: 272 320 308 320 308 370 283 395 270 405 220 408 220 418 186 418 186 408 210 395 210 383 255 380 260 360 272 350
5: 0 345 50 345 50 370 62 375 62 395 87 397 98 408 98 383 112 383 112 405 125 418 147 415 160 397 173 397 173 430 160 432 160 455 148 465 135 480 125 490 125 515 148 505 173 508 173 515 148 518 148 540 165 553 186 553 186 545 210 535 220 520 235 505 258 505 258 518 235 535 222 550 210 580 210 590 186 610 185 632 173 640 172 680 210 675 235 665 258 665 260 677 290 685 308 715 308 735 320 740 320 760 332 762 345 740 345 715 370 700 370 678 382 675 382 590 405 590 405 578 418 578 418 590 430 600 430 678 443 680 443 728 455 730 455 785 370 785 370 797 0 797
1: 0 370 35 380 50 420 50 465 0 455
6: 160 680 185 680 195 690 210 678 235 678 235 700 222 715 222 735 200 740 185 750 185 783 148 783 148 755 160 745
1: 210 724 222 736
1: 160 675 172 700
1: 98 590 111 602
6: 110 528 123 541
6: 86 565 99 577
5: 235 590 247 578 270 578 270 602 235 600
6: 222 590 235 613
2: 197 612 222 610 222 635 197 655 197 675 175 670 185 640
2: 148 785 173 797
1: 173 785 210 797
8: 14 765 50 770 65 797 14 797
7: 0 665 35 665 35 760 0 760
5: 711 383 723 383 725 395 738 397 738 455 722 460 722 490 710 500 710 525 698 530 698 612 685 615 685 637 675 637 675 540 662 535 662 518 675 512 675 495 690 490 700 460 711 440
5: 772 480 785 503
5: 797 614 810 626
5: 711 687 724 699
5: 748 640 773 640 773 687 760 687 760 663 748 660
5: 847 725 858 725 858 760 870 778 870 785 822 785 822 775 835 772 847 755
5: 932 383 945 405
5: 945 369 957 381
5: 920 430 957 430 957 540 932 540 932 552 920 552 920 535 932 525 932 495 945 475 932 460 932 443 920 442
5: 908 565 920 590` }
];
const COLS = 173, ROWS = 125, CELL = 4.078, LEFT = 426.6, TOP = 136.6;
const cells = new Uint8Array(COLS * ROWS).fill(1);

function inside(p, x, y) {
  let hit = false;
  for (let i = 0, j = p.length - 2; i < p.length; j = i, i += 2) {
    if ((p[i + 1] > y) !== (p[j + 1] > y) && x < (p[j] - p[i]) * (y - p[i + 1]) / (p[j + 1] - p[i + 1]) + p[i]) hit = !hit;
  }
  return hit;
}
for (const s of SHEETS) {
  const c0 = Math.max(0, Math.round((s.x - LEFT) / CELL)), c1 = Math.min(COLS, Math.round((s.x + s.w - LEFT) / CELL));
  const r0 = Math.max(0, Math.round((s.y - TOP) / CELL)), r1 = Math.min(ROWS, Math.round((s.y + s.h - TOP) / CELL));
  for (let r = r0; r < r1; r++) for (let c = c0; c < c1; c++) cells[r * COLS + c] = s.base;
  for (const line of s.data.trim().split('\n')) {
    const [cls, rest] = line.split(': ');
    const p = rest.split(' ').map(Number);
    if (p.length === 4) {
      const gx = v => Math.round((s.x + v / 3 - LEFT) / CELL), gy = v => Math.round((s.y + v / 3 - TOP) / CELL);
      const a = gx(p[0]), b = Math.max(a + 1, gx(p[2])), t = gy(p[1]), u = Math.max(t + 1, gy(p[3]));
      for (let r = Math.max(r0, t); r < Math.min(r1, u); r++) for (let c = Math.max(c0, a); c < Math.min(c1, b); c++) cells[r * COLS + c] = +cls;
    } else {
      for (let r = r0; r < r1; r++) for (let c = c0; c < c1; c++) {
        if (inside(p, (LEFT + (c + .5) * CELL - s.x) * 3, (TOP + (r + .5) * CELL - s.y) * 3)) cells[r * COLS + c] = +cls;
      }
    }
  }
}
const ctx = document.getElementById('map').getContext('2d');
cells.forEach((v, i) => { ctx.fillStyle = COLORS[v]; ctx.fillRect(i % COLS * 3, Math.floor(i / COLS) * 3, 3, 3); });

// Axes frame, ticks and colour bar
let g = '<g fill="none" stroke="#000"><rect x="426.5" y="136.500" width="705" height="509"/>';
for (let v = 0; v <= 120; v += 20) { const y = Math.round(138 + v * 4.08) + .5; g += `<path d="M427 ${y}h4M1132 ${y}h-4" stroke-width=".6"/>`; }
for (let v = 0; v <= 150; v += 50) { const x = Math.round(428 + v * 4.08) + .5; g += `<path d="M${x} 137v4M${x} 645v-4" stroke-width=".6"/>`; }
g += '</g>';
for (let k = 12; k >= 1; k--) { const y = 137 + (12 - k) * 42.4; g += `<rect x="1136" y="${Math.round(y)}" width="34" height="43" fill="${COLORS[k]}"/>`; }
g += '<rect x="1135.500" y="136.500" width="35" height="509" fill="none" stroke="#000"/>';
for (let k = 1; k <= 12; k++) {
  const y = 645.5 - (k - 1) * 42.45;
  g += `<path d="M1166 ${Math.round(y) - .5}h4" stroke="#000" stroke-width=".6"/><text x="1175" y="${Math.round(y + 4.5)}">HRU ${k}</text>`;
}
for (const v of [0, 20, 40, 60, 80]) g += `<text x="423" y="${Math.round(143 + v * 4.075)}" text-anchor="end">${v}</text>`;
g += '<text x="835.5" y="659" text-anchor="middle">100</text><text x="1039.500" y="659" text-anchor="middle">150</text>';
document.getElementById('axes').innerHTML = g;
```
